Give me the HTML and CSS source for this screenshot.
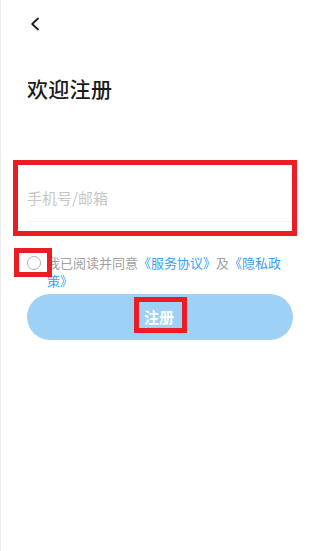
FILE: index.html
```html
<!DOCTYPE html>
<html>
	<head>
		<meta charset="utf-8">
		<title>欢迎注册</title>
		<link rel="stylesheet" href="styles.css">
	</head>
	<body>
		<div class="page">
			<!-- 顶部返回 -->
			<div class="nav">
				<svg class="back" width="10" height="14" viewBox="0 0 10 14">
					<path d="M8 1.5 L2.2 7 L8 12.5" fill="none" stroke="#1c1c1c" stroke-width="1.8" stroke-linecap="round" stroke-linejoin="round"/>
				</svg>
			</div>

			<h1 class="title">欢迎注册</h1>

			<!-- 账号输入 -->
			<div class="field">
				<input class="input" type="text" placeholder="手机号/邮箱">
				<span class="mark mark-field"></span>
			</div>

			<!-- 协议 -->
			<div class="agree">
				<span class="radio">
					<span class="mark mark-radio"></span>
				</span>
				<p class="agree-text">我已阅读并同意<a href="#">《服务协议》</a>及<a href="#">《隐私政策》</a></p>
			</div>

			<button class="submit">
				<span class="submit-label">注册<span class="mark mark-btn"></span></span>
			</button>
		</div>
	</body>
</html>
```

FILE: styles.css
```css
* {
	margin: 0;
	padding: 0;
	box-sizing: border-box;
}
body {
	background: #fff;
	font-family: "Noto Sans CJK SC", "Noto Sans", sans-serif;
	color: #1c1c1c;
}
.page {
	width: 320px;
	height: 551px;
	border-left: 1px solid #ececec;
	padding: 0 27px 0 26px;
	display: flex;
	flex-direction: column;
}
.nav {
	height: 48px;
	display: flex;
	align-items: center;
}
.back {
	display: block;
	margin-left: 3px;
}
.title {
	margin-top: 25px;
	font-size: 21px;
	line-height: 30px;
	font-weight: 500;
	letter-spacing: 0.3px;
}
.field {
	position: relative;
	margin-top: 69px;
	height: 50px;
	border-bottom: 1px solid #f3f3f3;
}
.input {
	width: 100%;
	height: 100%;
	border: none;
	outline: none;
	background: transparent;
	padding-top: 2px;
	font-family: inherit;
	font-size: 15px;
	color: #333;
}
.input::placeholder {
	color: #c6c6c6;
}
.agree {
	margin-top: 32px;
	display: flex;
	align-items: flex-start;
}
.radio {
	position: relative;
	flex: none;
	width: 14px;
	height: 14px;
	margin-top: 2px;
	border: 1.5px solid #b4b4b4;
	border-radius: 50%;
}
.agree-text {
	flex: 1;
	margin-left: 6px;
	padding-right: 4px;
	font-size: 13px;
	line-height: 18px;
	color: #a0a0a0;
}
.agree-text a {
	color: #3a9ff0;
	text-decoration: none;
}
.submit {
	margin-top: 4px;
	height: 46px;
	border: none;
	border-radius: 23px;
	background: #9dd2f6;
	display: flex;
	justify-content: center;
	align-items: center;
	font-family: inherit;
}
.submit-label {
	position: relative;
	font-size: 15px;
	line-height: 20px;
	font-weight: 700;
	color: #fff;
	margin-left: -2px;
}
/* 红色标注框 */
.mark {
	position: absolute;
	border: 5px solid #ec1b24;
	pointer-events: none;
}
.mark-field {
	left: -14px;
	right: -4px;
	top: -12px;
	bottom: -15px;
}
.mark-radio {
	left: -14px;
	right: -12px;
	top: -9px;
	bottom: -8px;
}
.mark-btn {
	left: -10px;
	right: -13px;
	top: -10px;
	bottom: -6px;
}
```
